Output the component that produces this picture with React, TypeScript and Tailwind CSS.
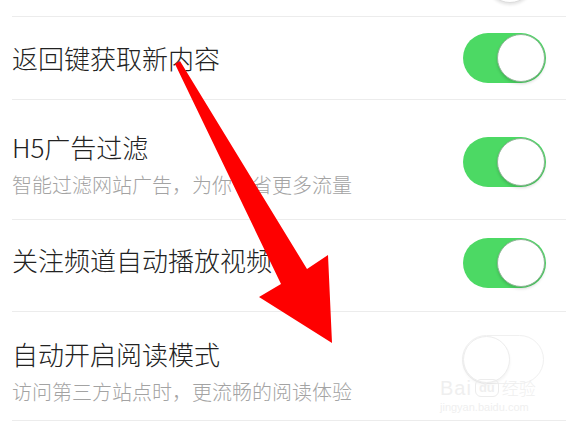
import React from 'react';

const font = { fontFamily: '"Noto Sans CJK SC", "Noto Sans", sans-serif' };

const Toggle = ({ on }: { on: boolean }) =>
  on ? (
    <div className="w-[83px] h-[50px] rounded-full bg-[#4cd964] p-px flex justify-end shrink-0">
      <div className="w-[48px] h-[48px] rounded-full bg-white border border-[#8fb596] shadow-[0_2px_3px_rgba(0,0,0,0.15)]" />
    </div>
  ) : (
    <div className="w-[82px] h-[49px] rounded-full bg-white border border-[#f0f0f0] flex justify-start shrink-0">
      <div className="w-[47px] h-[47px] rounded-full bg-white border border-[#ededed] shadow-[0_2px_3px_rgba(0,0,0,0.05)]" />
    </div>
  );

export default function App() {
  return (
    <div className="relative w-[566px] h-[424px] bg-white overflow-hidden font-light" style={font}>
      <div className="pl-[12px]">
        {/* cut-off row above */}
        <div className="h-[17px] border-b border-[#ececec] flex justify-end items-end pr-[32px] overflow-hidden">
          <div className="w-[48px] h-[48px] rounded-full bg-white border border-[#dcdcdc] mb-[13px] shadow-[0_2px_3px_rgba(0,0,0,0.1)]" />
        </div>

        <div className="h-[83px] border-b border-[#ececec] flex items-center justify-between pr-[20px]">
          <div className="text-[26px] leading-[32px] text-[#222]">返回键获取新内容</div>
          <Toggle on />
        </div>

        <div className="h-[120px] border-b border-[#ececec] flex items-center justify-between pr-[20px]">
          <div className="mt-[9px]">
            <div className="text-[26px] leading-[32px] text-[#222]">H5广告过滤</div>
            <div className="mt-[10px] text-[20px] leading-[24px] text-[#a3a3a3]">智能过滤网站广告，为你节省更多流量</div>
          </div>
          <div className="mt-[5px]">
            <Toggle on />
          </div>
        </div>

        <div className="h-[92px] border-b border-[#ececec] flex items-center justify-between pr-[20px]">
          <div className="mb-[11px] text-[26px] leading-[32px] text-[#222]">关注频道自动播放视频</div>
          <div className="mb-[6px]">
            <Toggle on />
          </div>
        </div>

        <div className="h-[109px] border-b border-[#ececec] flex items-center justify-between pr-[22px]">
          <div className="mt-[9px]">
            <div className="text-[26px] leading-[32px] text-[#222]">自动开启阅读模式</div>
            <div className="mt-[10px] text-[20px] leading-[24px] text-[#a3a3a3]">访问第三方站点时，更流畅的阅读体验</div>
          </div>
          <div className="mb-[13px]">
            <Toggle on={false} />
          </div>
        </div>
      </div>

      {/* watermark */}
      <div className="absolute left-[440px] top-[378px] flex flex-col items-start text-[#efefef]">
        <div className="flex items-center leading-[20px]" style={{ fontFamily: '"Liberation Sans", sans-serif' }}>
          <span className="text-[20px] tracking-[1px]">Bai</span>
          <span className="ml-[3px] px-[3px] rounded-[6px] border border-[#ececec] text-[13px] leading-[16px] font-bold">du</span>
          <span className="ml-[3px] text-[17px]" style={font}>经验</span>
        </div>
        <div className="text-[11px] leading-[14px] mt-[2px]" style={{ fontFamily: '"Liberation Sans", sans-serif' }}>jingyan.baidu.com</div>
      </div>

      {/* red arrow */}
      <svg className="absolute inset-0" width="566" height="424" viewBox="0 0 566 424">
        <polygon
          points="175,64 180,61 307,269 328,255 332,343 259,297 281,284"
          fill="#fe0000"
        />
      </svg>
    </div>
  );
}
